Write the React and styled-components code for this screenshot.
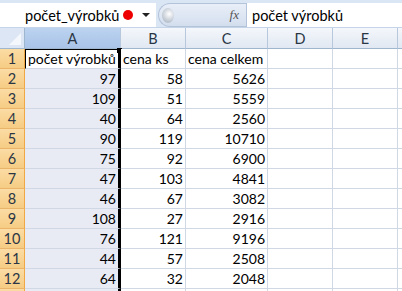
import styled, { createGlobalStyle } from 'styled-components'

const GlobalStyle = createGlobalStyle`
  html, body {
    margin: 0;
    padding: 0;
    background: #ffffff;
    overflow: hidden;
  }
  body {
    font-family: Lato, "Liberation Sans", sans-serif;
  }
`

const Window = styled.div`
  width: 402px;
  height: 291px;
  overflow: hidden;
  background: #ffffff;
`

const FormulaBar = styled.div`
  display: flex;
  align-items: stretch;
  height: 28px;
  box-sizing: border-box;
  padding-top: 3px;
  background: #dbe6f4;
  border-bottom: 1px solid #c5d4e8;
`

const NameBox = styled.div`
  display: flex;
  align-items: center;
  width: 156px;
  background: #ffffff;
  box-sizing: border-box;
  padding-left: 25px;
  font-size: 14.5px;
  color: #000;
`

const NameText = styled.span`
  flex: 1;
  white-space: nowrap;
`

const RedDot = styled.span`
  width: 10px;
  height: 10px;
  border-radius: 50%;
  background: #ee0000;
  margin-right: 9px;
`

const Arrow = styled.span`
  width: 0;
  height: 0;
  border-left: 4px solid transparent;
  border-right: 4px solid transparent;
  border-top: 4px solid #222;
  margin-right: 6px;
`

const Middle = styled.div`
  position: relative;
  display: flex;
  align-items: center;
  justify-content: flex-end;
  width: 88px;
  background: linear-gradient(#e9eff8, #d3deee);
  border-radius: 12px 0 0 12px;
  border: 1px solid #b3c3da;
  border-right: none;
  box-sizing: border-box;
  margin-left: 2px;
`

const Grip = styled.span`
  position: absolute;
  left: 3px;
  top: 4px;
  width: 12px;
  height: 15px;
  border-radius: 50%;
  background: radial-gradient(circle at 60% 40%, #ffffff, #b9c2cd 70%);
`

const Fx = styled.span`
  font-family: "Liberation Serif", serif;
  font-style: italic;
  font-size: 13px;
  color: #555;
  margin-right: 7px;
`

const FormulaInput = styled.div`
  flex: 1;
  display: flex;
  align-items: center;
  background: #ffffff;
  border-left: 1px solid #b3c3da;
  padding-left: 5px;
  font-size: 14.5px;
  color: #000;
`

const Sheet = styled.div`
  display: grid;
  grid-template-columns: 25px 96px 65px 82px 65px 65px 1fr;
  grid-auto-rows: 20px;
  grid-template-rows: 21px;
`

const Corner = styled.div`
  position: relative;
  background: #dce6f4;
  border-right: 1px solid #9eb6ce;
  border-bottom: 1px solid #9eb6ce;
  box-sizing: border-box;

  &::after {
    content: '';
    position: absolute;
    right: 3px;
    bottom: 3px;
    width: 0;
    height: 0;
    border-left: 12px solid transparent;
    border-bottom: 12px solid #f4f7fb;
  }
`

const ColHead = styled.div`
  display: flex;
  align-items: center;
  justify-content: center;
  box-sizing: border-box;
  font-size: 14.5px;
  color: #2b3645;
  background: ${p => (p.$selected ? 'linear-gradient(#bcd3f0, #a9c4e8)' : 'linear-gradient(#f4f7fb, #e1e8f2)')};
  border-right: 1px solid #b7c8dc;
  border-bottom: 1px solid #9eb6ce;
`

const RowHead = styled.div`
  display: flex;
  align-items: flex-end;
  justify-content: center;
  box-sizing: border-box;
  padding-bottom: 1px;
  font-size: 14.5px;
  color: #2b3645;
  background: linear-gradient(#fbdca4, #f6cc84);
  border-right: 1px solid #f0a845;
  border-bottom: 1px solid #eab56a;
`

const Cell = styled.div`
  display: flex;
  align-items: flex-end;
  justify-content: ${p => (p.$num ? 'flex-end' : 'flex-start')};
  box-sizing: border-box;
  padding: 0 2px 1px;
  font-size: 14px;
  color: #000;
  white-space: nowrap;
  background: ${p => (p.$sel && !p.$active ? '#e8ebf4' : '#ffffff')};
  border-right: ${p => (p.$sel ? '3px solid #000' : '1px solid #d0d7e5')};
  border-bottom: 1px solid #d0d7e5;
  ${p => p.$active && 'border-left: 1px solid #000; border-top: 1px solid #000;'}
  position: relative;
`

const Handle = styled.span`
  position: absolute;
  right: -4px;
  top: -2px;
  width: 5px;
  height: 5px;
  background: #000;
`

const headers = ['A', 'B', 'C', 'D', 'E', '']

const rows = [
  [97, 58, 5626],
  [109, 51, 5559],
  [40, 64, 2560],
  [90, 119, 10710],
  [75, 92, 6900],
  [47, 103, 4841],
  [46, 67, 3082],
  [108, 27, 2916],
  [76, 121, 9196],
  [44, 57, 2508],
  [64, 32, 2048],
]

const App = () => {
  return (
    <Window>
      <GlobalStyle />
      <FormulaBar>
        <NameBox>
          <NameText>počet_výrobků</NameText>
          <RedDot />
          <Arrow />
        </NameBox>
        <Middle>
          <Grip />
          <Fx>fx</Fx>
        </Middle>
        <FormulaInput>počet výrobků</FormulaInput>
      </FormulaBar>
      <Sheet>
        <Corner />
        {headers.map((h, i) => (
          <ColHead key={i} $selected={h === 'A'}>{h}</ColHead>
        ))}

        <RowHead>1</RowHead>
        <Cell $sel $active>
          počet výrobků
          <Handle />
        </Cell>
        <Cell>cena ks</Cell>
        <Cell>cena celkem</Cell>
        <Cell />
        <Cell />
        <Cell />

        {rows.map((r, i) => [
          <RowHead key={'h' + i}>{i + 2}</RowHead>,
          <Cell key={'a' + i} $sel $num>{r[0]}</Cell>,
          <Cell key={'b' + i} $num>{r[1]}</Cell>,
          <Cell key={'c' + i} $num>{r[2]}</Cell>,
          <Cell key={'d' + i} />,
          <Cell key={'e' + i} />,
          <Cell key={'f' + i} />,
        ])}

        <RowHead />
        <Cell $sel />
        <Cell />
        <Cell />
        <Cell />
        <Cell />
        <Cell />
      </Sheet>
    </Window>
  )
}

export default App
